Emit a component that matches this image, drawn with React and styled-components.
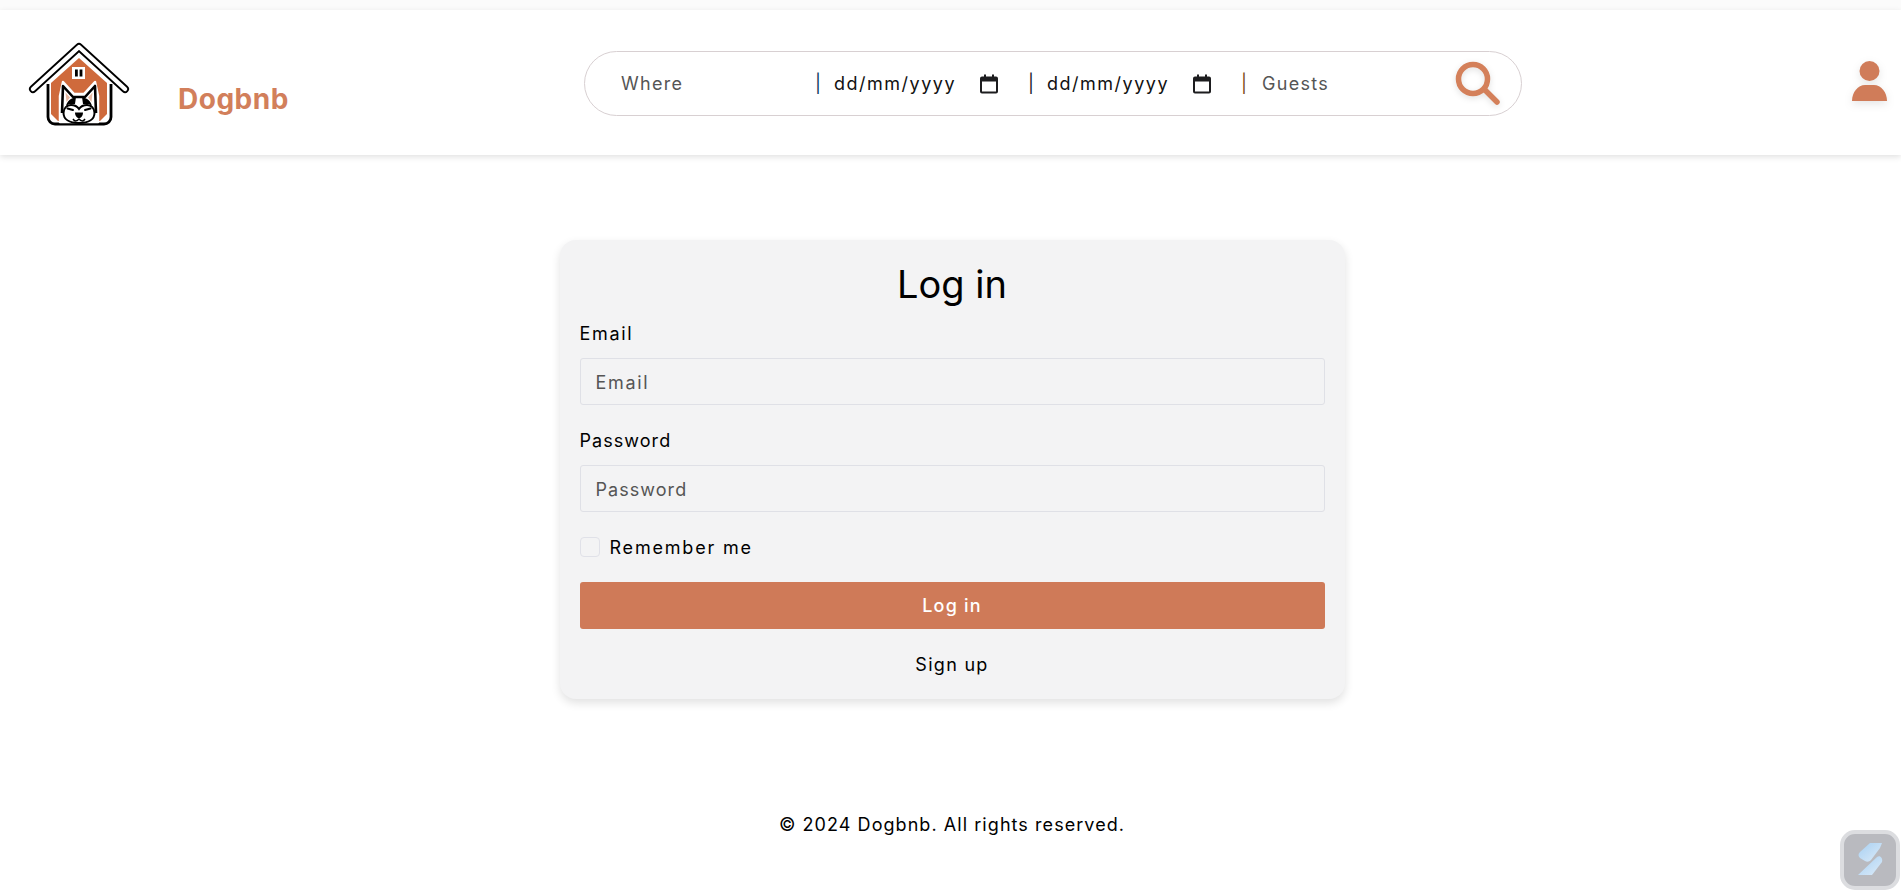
import React from 'react'
import styled, { createGlobalStyle } from 'styled-components'

const GlobalStyle = createGlobalStyle`
  html, body {
    margin: 0;
    padding: 0;
    background: #fff;
    font-family: "Inter", "Open Sans", "Liberation Sans", sans-serif;
    color: #000;
  }
  * { box-sizing: border-box; }
`

const Page = styled.div`
  height: 891px;
  overflow: hidden;
  padding-top: 10px;
  background: linear-gradient(#fbfbfb 10px, #fff 10px);
`

const Header = styled.header`
  height: 145px;
  background: #fff;
  box-shadow: 0 2px 6px rgba(0, 0, 0, 0.12);
  display: grid;
  grid-template-columns: 584px 938px 1fr;
  align-items: center;
`

const Brand = styled.div`
  display: flex;
  align-items: center;
  padding: 4px 0 0 28px;
`

const BrandName = styled.span`
  margin-left: 46px;
  margin-top: 28px;
  font-size: 28px;
  font-weight: 700;
  letter-spacing: 0.5px;
  color: #d27f5b;
`

const SearchBar = styled.form`
  height: 65px;
  margin-top: 2px;
  border: 1px solid #d8d0d2;
  border-radius: 33px;
  display: flex;
  align-items: center;
  padding: 0 20px 0 36px;
  font-size: 18px;
`

const BarInput = styled.input`
  border: 0;
  outline: 0;
  background: transparent;
  font: inherit;
  width: ${p => p.$width}px;
  padding: 0;
  letter-spacing: 1.3px;
  &::placeholder { color: #555; opacity: 1; }
`

const Segment = styled.div`
  width: 213px;
  display: flex;
  align-items: center;
`

const Sep = styled.span`
  width: ${p => p.$width || 19}px;
  color: ${p => p.$color || '#000'};
`

const DateText = styled.span`
  width: 146px;
  color: #111;
  letter-spacing: 1.5px;
`

const SearchButton = styled.button`
  border: 0;
  background: none;
  padding: 0;
  margin-left: auto;
  display: flex;
  filter: drop-shadow(0 2px 3px rgba(0, 0, 0, 0.12));
`

const UserBlock = styled.div`
  display: flex;
  justify-content: flex-end;
  padding-right: 14px;
  margin-top: -3px;
  filter: drop-shadow(0 3px 4px rgba(0, 0, 0, 0.1));
`

const Main = styled.main`
  display: flex;
  justify-content: center;
  padding-top: 85px;
  padding-left: 3px;
`

const Card = styled.form`
  width: 785px;
  height: 459px;
  padding: 20px 20px 0;
  background: #f3f3f4;
  border-radius: 16px;
  box-shadow: 0 4px 10px rgba(0, 0, 0, 0.12);
`

const Title = styled.h1`
  margin: 0 0 14px;
  font-size: 38px;
  line-height: 48px;
  font-weight: 400;
  text-align: center;
`

const Label = styled.label`
  display: block;
  font-size: 18px;
  line-height: 24px;
  margin-bottom: 12px;
  letter-spacing: ${p => p.$spacing}px;
`

const TextInput = styled.input`
  display: block;
  width: 100%;
  height: 47px;
  margin-bottom: 24px;
  padding: 2px 15px 0;
  border: 1px solid #dfe0e6;
  border-radius: 3px;
  background: #f3f3f4;
  outline: 0;
  font: inherit;
  font-size: 18px;
  letter-spacing: ${p => p.$spacing}px;
  &::placeholder { color: #555; opacity: 1; }
`

const RememberRow = styled.div`
  display: flex;
  align-items: center;
  gap: 10px;
  height: 24px;
  margin-top: -1px;
  font-size: 18px;
  letter-spacing: 1.8px;
`

const CheckBox = styled.span`
  width: 20px;
  height: 20px;
  border: 1px solid #e0e1e8;
  border-radius: 4px;
`

const SubmitButton = styled.button`
  display: block;
  width: 100%;
  height: 47px;
  margin-top: 23px;
  border: 0;
  border-radius: 3px;
  background: #cf7a58;
  color: #fff;
  font: inherit;
  font-size: 18px;
  font-weight: 500;
  letter-spacing: 1.2px;
`

const SignUp = styled.div`
  margin-top: 24px;
  text-align: center;
  font-size: 18px;
  line-height: 24px;
  letter-spacing: 1.3px;
`

const Footer = styled.footer`
  margin-top: 114px;
  padding-left: 3px;
  text-align: center;
  font-size: 18px;
  line-height: 24px;
  letter-spacing: 1.06px;
`

const Widget = styled.div`
  position: fixed;
  right: 1px;
  bottom: 1px;
  width: 60px;
  height: 60px;
  border: 4px solid #dcdde0;
  border-radius: 15px;
  background: #b9babf;
  display: flex;
  align-items: center;
  justify-content: center;
`

function Logo() {
  return (
    <svg width="104" height="86" viewBox="8 8 104 86" fill="none">
      <path d="M28 50V83a7 7 0 0 0 7 7H84a7 7 0 0 0 7-7V50" stroke="#000" strokeWidth="2.8" fill="#fff" />
      <path d="M59 24L31 49V80L38 87H80L87 80V49Z" fill="#cf6a3c" />
      <path d="M13 55L59 13L105 55" stroke="#000" strokeWidth="8" strokeLinecap="round" strokeLinejoin="round" />
      <path d="M13 55L59 13L105 55" stroke="#fff" strokeWidth="4.4" strokeLinecap="round" strokeLinejoin="round" />
      <rect x="52" y="33" width="13" height="12" fill="#fff" />
      <rect x="55" y="35.5" width="2.8" height="7" fill="#000" />
      <rect x="59.6" y="35.5" width="2.8" height="7" fill="#000" />
      <path d="M40 88V62L43 48L54 60H64L75 48L78 62V88Z" fill="#fff" stroke="#fff" strokeWidth="2.5" strokeLinejoin="round" />
      <path d="M42 79L43 52L53 63H65L75 52L76 79" fill="#fff" stroke="#000" strokeWidth="2.6" strokeLinejoin="round" />
      <path d="M46.5 68L45.5 58.5L50 63.5Z M71.5 68L72.5 58.5L68 63.5Z" fill="#e6b9a3" />
      <path d="M46 72C47 67 51 64 56 63L55 70L49 70Z M72 72C71 67 67 64 62 63L63 70L69 70Z" fill="#000" />
      <path d="M43.5 79C43.5 74 47 71 51 71C54 71 57 72 59 75C61 72 64 71 67 71C71 71 74.5 74 74.5 79C74.5 85 69 89 59 89C49 89 43.5 85 43.5 79Z" fill="#fff" stroke="#000" strokeWidth="2" />
      <path d="M47.5 74.5L53 76M70.5 74.5L65 76" stroke="#000" strokeWidth="2" strokeLinecap="round" />
      <path d="M55 78.5H63C63 82 61 84 59 84C57 84 55 82 55 78.5Z" fill="#000" />
      <path d="M53 85C55 88 57 87 59 85C61 87 63 88 65 85" stroke="#000" strokeWidth="1.5" />
    </svg>
  )
}

function CalendarIcon() {
  return (
    <svg width="18" height="20" viewBox="0 0 18 20">
      <path d="M4 0.5h2v2h6v-2h2v2h2a2 2 0 0 1 2 2v13a2 2 0 0 1-2 2H2a2 2 0 0 1-2-2v-13a2 2 0 0 1 2-2h2ZM2 7.5v10h14v-10Z" fill="#1d1d1f" fillRule="evenodd" />
    </svg>
  )
}

function SearchIcon() {
  return (
    <svg width="46" height="46" viewBox="0 0 46 46" fill="none" stroke="#d4805a" strokeWidth="5.5" strokeLinecap="round">
      <circle cx="18" cy="18" r="14.5" />
      <path d="M30 29L42 41" />
    </svg>
  )
}

function UserIcon() {
  return (
    <svg width="35" height="40" viewBox="0 0 35 40" fill="#d07c59">
      <circle cx="17.5" cy="10" r="10" />
      <path d="M0 40C0 31 6 24 13 24H22C29 24 35 31 35 40Z" />
    </svg>
  )
}

function WidgetIcon() {
  return (
    <svg width="40" height="40" viewBox="0 0 40 40">
      <defs>
        <linearGradient id="shard" x1="0" y1="0" x2="1" y2="1">
          <stop offset="0" stopColor="#a8d0f2" />
          <stop offset="1" stopColor="#dcebf8" />
        </linearGradient>
      </defs>
      <path d="M20 3H32L30 8L21 20C19 22 17 22 15 21L10 18C8 16 8 14 10 12Z" fill="url(#shard)" />
      <path d="M27 17C30 15 33 18 32 22L22 35H8Z" fill="url(#shard)" />
    </svg>
  )
}

function DateSegment({ color }) {
  return (
    <Segment>
      <Sep $color={color}>|</Sep>
      <DateText>dd/mm/yyyy</DateText>
      <CalendarIcon />
    </Segment>
  )
}

export default function App() {
  return (
    <Page>
      <GlobalStyle />
      <Header>
        <Brand>
          <Logo />
          <BrandName>Dogbnb</BrandName>
        </Brand>
        <SearchBar>
          <BarInput $width={194} placeholder="Where" />
          <DateSegment color="#0b3a5c" />
          <DateSegment color="#1a1a2a" />
          <Sep $color="#7a4a10" $width={21}>|</Sep>
          <BarInput $width={120} placeholder="Guests" />
          <SearchButton type="button"><SearchIcon /></SearchButton>
        </SearchBar>
        <UserBlock><UserIcon /></UserBlock>
      </Header>
      <Main>
        <Card>
          <Title>Log in</Title>
          <Label $spacing={1.7}>Email</Label>
          <TextInput $spacing={1.7} placeholder="Email" />
          <Label $spacing={1.05}>Password</Label>
          <TextInput $spacing={1.05} placeholder="Password" />
          <RememberRow><CheckBox />Remember me</RememberRow>
          <SubmitButton type="button">Log in</SubmitButton>
          <SignUp>Sign up</SignUp>
        </Card>
      </Main>
      <Footer>© 2024 Dogbnb. All rights reserved.</Footer>
      <Widget><WidgetIcon /></Widget>
    </Page>
  )
}
